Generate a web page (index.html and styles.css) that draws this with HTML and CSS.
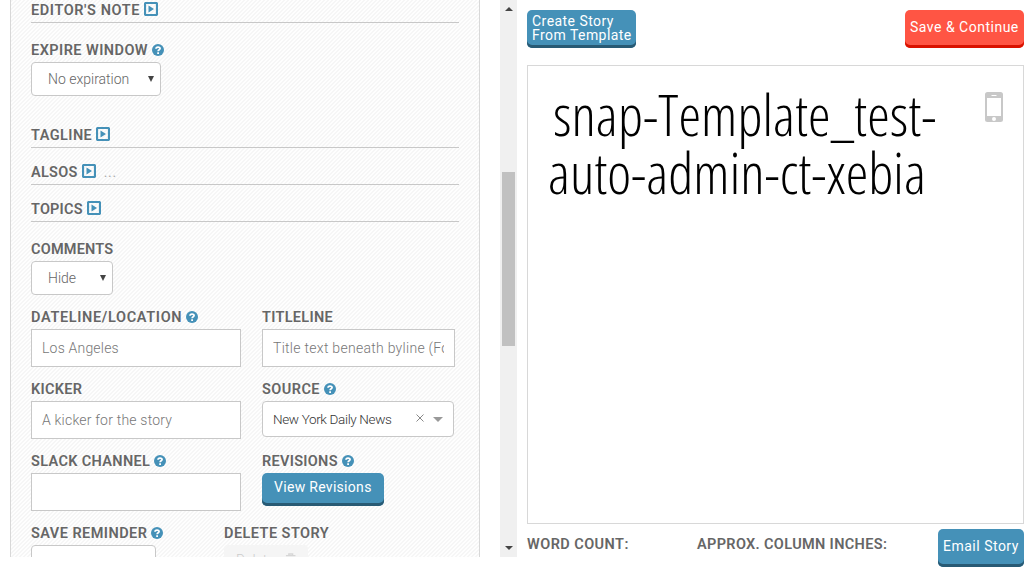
FILE: index.html
```html
<!DOCTYPE html>
<html lang="en">
<head>
<meta charset="utf-8">
<title>Story editor</title>
<link rel="stylesheet" href="styles.css">
</head>
<body>
<svg width="0" height="0" class="defs">
  <symbol id="help" viewBox="0 0 12 12"><circle cx="6" cy="6" r="6" fill="#4591b8"/><path d="M4 4.7C4 2.6 8.1 2.500 8.1 4.6 8.1 5.9 6.1 5.7 6.1 7.3" fill="none" stroke="#fff" stroke-width="1.7"/><path d="M5.2 8.3h1.8v1.6H5.2z" fill="#fff"/></symbol>
  <symbol id="play" viewBox="0 0 14 14"><rect x="1" y="1" width="12" height="12" rx="1" fill="none" stroke="#4591b8" stroke-width="2.200"/><path d="M4.500 3.400v7.200L10 7z" fill="#4591b8"/></symbol>
</svg>
<div class="app">
  <div class="editor">
    <form class="panel">
      <div class="section first"><span class="label l-note">EDITOR'S NOTE</span><svg class="play"><use href="#play"/></svg></div>
      <div class="field expire">
        <div class="caption"><span class="label l-expire">EXPIRE WINDOW</span><svg class="help"><use href="#help"/></svg></div>
        <div class="select s-expire"><span>No expiration</span><i class="arrow"></i></div>
      </div>
      <div class="section"><span class="label l-tag">TAGLINE</span><svg class="play"><use href="#play"/></svg></div>
      <div class="section"><span class="label l-alsos">ALSOS</span><svg class="play"><use href="#play"/></svg><span class="dots">...</span></div>
      <div class="section"><span class="label l-topics">TOPICS</span><svg class="play"><use href="#play"/></svg></div>
      <div class="field comments">
        <div class="caption"><span class="label l-comments">COMMENTS</span></div>
        <div class="select s-hide"><span>Hide</span><i class="arrow"></i></div>
      </div>
      <div class="grid">
        <div class="field">
          <div class="caption"><span class="label l-date">DATELINE/LOCATION</span><svg class="help"><use href="#help"/></svg></div>
          <div class="input"><span>Los Angeles</span></div>
        </div>
        <div class="field">
          <div class="caption"><span class="label l-title">TITLELINE</span></div>
          <div class="input"><span class="clip">Title text beneath byline (For example)</span></div>
        </div>
        <div class="field">
          <div class="caption"><span class="label l-kicker">KICKER</span></div>
          <div class="input"><span>A kicker for the story</span></div>
        </div>
        <div class="field">
          <div class="caption"><span class="label l-source">SOURCE</span><svg class="help"><use href="#help"/></svg></div>
          <div class="combo"><span>New York Daily News</span><svg class="clear" viewBox="0 0 8 8"><path d="M.5.5l7 7M7.500.5l-7 7"/></svg><i class="caret"></i></div>
        </div>
        <div class="field">
          <div class="caption"><span class="label l-slack">SLACK CHANNEL</span><svg class="help"><use href="#help"/></svg></div>
          <div class="input"></div>
        </div>
        <div class="field">
          <div class="caption"><span class="label l-rev">REVISIONS</span><svg class="help"><use href="#help"/></svg></div>
          <div class="btn revisions"><span>View Revisions</span></div>
        </div>
      </div>
      <div class="last">
        <div class="field">
          <div class="caption"><span class="label l-save">SAVE REMINDER</span><svg class="help"><use href="#help"/></svg></div>
          <div class="select s-save"></div>
        </div>
        <div class="field">
          <div class="caption"><span class="label l-delete">DELETE STORY</span></div>
          <div class="delete"><span>Delete</span><svg width="12" height="13" viewBox="0 0 12 13"><path d="M1 2.500h10M4 2V.7h4V2M2 4v8h8V4M4.500 5v5M7.500 5v5" fill="none" stroke="#d6d6d6" stroke-width="1.400"/></svg></div>
        </div>
      </div>
    </form>
    <div class="scroll"><i class="up"></i><div class="thumb"></div><i class="down"></i></div>
  </div>
  <main class="preview">
    <div class="top">
      <div class="btn create"><span>Create Story</span><span>From Template</span></div>
      <div class="btn save"><span>Save &amp; Continue</span></div>
    </div>
    <div class="page">
      <h1><span class="h-one">snap-Template_test-</span><span class="h-two">auto-admin-ct-xebia</span></h1>
      <svg class="phone" width="18" height="30" viewBox="0 0 18 30"><path fill="#c8c8c8" fill-rule="evenodd" d="M2.500 0h13A2.500 2.500 0 0 1 18 2.500v25a2.500 2.500 0 0 1-2.500 2.500h-13A2.500 2.500 0 0 1 0 27.500v-25A2.500 2.500 0 0 1 2.500 0zM2 6v18h14V6zM6.500 3v1h5V3zM9 25a2 2 0 1 0 0 4 2 2 0 0 0 0-4z"/></svg>
    </div>
    <div class="bottom">
      <span class="label l-words">WORD COUNT:</span>
      <span class="label l-inches">APPROX. COLUMN INCHES:</span>
      <div class="btn email"><span>Email Story</span></div>
    </div>
  </main>
</div>
</body>
</html>
```
FILE: styles.css
```css
* { box-sizing: border-box; }
body { margin: 0; background: #fff; font: 300 14px/16px Roboto, sans-serif; color: #666; }
.defs { position: absolute; }
.app { display: flex; width: 1034px; height: 576px; overflow: hidden; }
.editor { display: flex; justify-content: space-between; width: 517px; height: 557px; padding-left: 10px; overflow: hidden; }
.panel {
  width: 470px; height: 557px; padding: 0 20px; overflow: hidden;
  border: solid #d8d8d8; border-width: 0 1px;
  background: linear-gradient(135deg, #f6f6f6 25%, #fefefe 25%, #fefefe 50%, #f6f6f6 50%, #f6f6f6 75%, #fefefe 75%) 0 0 / 4px 4px;
}
.section { display: flex; align-items: center; height: 37px; padding-top: 11px; border-bottom: 1px solid #c8c8c8; }
.section .label { padding-top: 2px; }
.first { margin-top: -14px; }
.label { padding-top: 1px; font-weight: 600; font-size: 14.5px; line-height: 24px; color: #666; white-space: nowrap; letter-spacing: .3px; }
.l-note { letter-spacing: .6px; }
.l-expire, .l-save, .l-tag, .l-source, .l-delete, .l-words { letter-spacing: .45px; }
.l-date { letter-spacing: .65px; }
.l-topics, .l-comments { letter-spacing: .2px; }
.l-slack, .l-inches { letter-spacing: .35px; }
.play { width: 14px; height: 14px; margin: -1px 0 0 4px; }
.help { width: 12px; height: 12px; margin-left: 4px; }
.dots { margin-left: 8px; font-weight: 400; color: #aaa; letter-spacing: .7px; }
.caption { display: flex; align-items: center; height: 24px; }
.expire { margin: 15px 0; }
.comments { margin: 15px 0 10px; }
.select { display: flex; align-items: center; justify-content: space-between; height: 34px; padding: 0 6px 0 16px; border: 1px solid #c8c8c8; border-radius: 4px; background: #fff; }
.s-expire { width: 130px; }
.s-hide { width: 82px; }
.s-save { width: 125px; }
.arrow { border: solid transparent; border-width: 6px 3px 0; border-top-color: #444; }
.grid { display: grid; grid-template-columns: 210px 193px; column-gap: 21px; row-gap: 10px; }
.input { display: flex; align-items: center; height: 38px; padding: 0 10px; border: 1px solid #c8c8c8; background: #fff; color: #777; letter-spacing: .2px; }
.clip { overflow: hidden; white-space: nowrap; letter-spacing: .28px; }
.combo { display: flex; align-items: center; width: 192px; height: 36px; padding: 0 10px; border: 1px solid #c8c8c8; border-radius: 4px; background: #fff; color: #333; font-size: 13.5px; letter-spacing: -.35px; white-space: nowrap; }
.combo span { width: 143px; }
.clear { width: 8px; height: 8px; margin-bottom: 2px; fill: none; stroke: #888; }
.caret { margin-left: auto; border: solid transparent; border-width: 5px 5px 0; border-top-color: #999; }
.btn { display: flex; flex-direction: column; justify-content: center; height: 38px; padding: 0 5px 3px; border-radius: 5px; background: #4591b8; box-shadow: inset 0 -3px #285a74; color: #fff; font-size: 14px; font-weight: 400; line-height: 14px; letter-spacing: .45px; white-space: nowrap; }
.revisions { width: 122px; height: 33px; padding: 0 12px 5px; letter-spacing: .3px; }
.last { display: grid; grid-template-columns: 193px 150px; margin-top: 10px; }
.delete { display: flex; align-items: center; gap: 10px; width: 84px; height: 33px; padding: 0 12px 4px; border-radius: 4px; background: #f5f5f5; color: #ccc; }
.scroll { display: flex; flex-direction: column; align-items: center; width: 17px; background: #f0f0f0; }
.up { margin-top: 7px; border: solid transparent; border-width: 0 4px 4px; border-bottom-color: #444; }
.thumb { width: 13px; height: 174px; margin-top: 161px; background: #c1c1c1; }
.down { margin-top: 200px; border: solid transparent; border-width: 4px 4px 0; border-top-color: #444; }
.preview { width: 517px; padding: 10px 10px 0; }
.top { display: flex; justify-content: space-between; }
.create { width: 109px; }
.save { width: 119px; padding-bottom: 4px; background: #ff5544; box-shadow: inset 0 -3px #d91200; letter-spacing: .5px; }
.page { display: flex; justify-content: space-between; height: 459px; margin-top: 17px; padding: 19px 20px 0 20px; border: 1px solid #d8d8d8; }
h1 { margin: 0; font: 300 57px/58px "Open Sans", sans-serif; font-stretch: 75%; color: #000; }
h1 span { display: block; white-space: nowrap; width: 390px; }
.h-one { padding-left: 5px; letter-spacing: .1px; }
.phone { flex: none; margin-top: 7px; }
.bottom { display: flex; margin-top: 5px; }
.bottom .label { line-height: 30px; }
.l-words { width: 170px; }
.email { width: 86px; margin-left: auto; padding-bottom: 4px; letter-spacing: .5px; }
```
